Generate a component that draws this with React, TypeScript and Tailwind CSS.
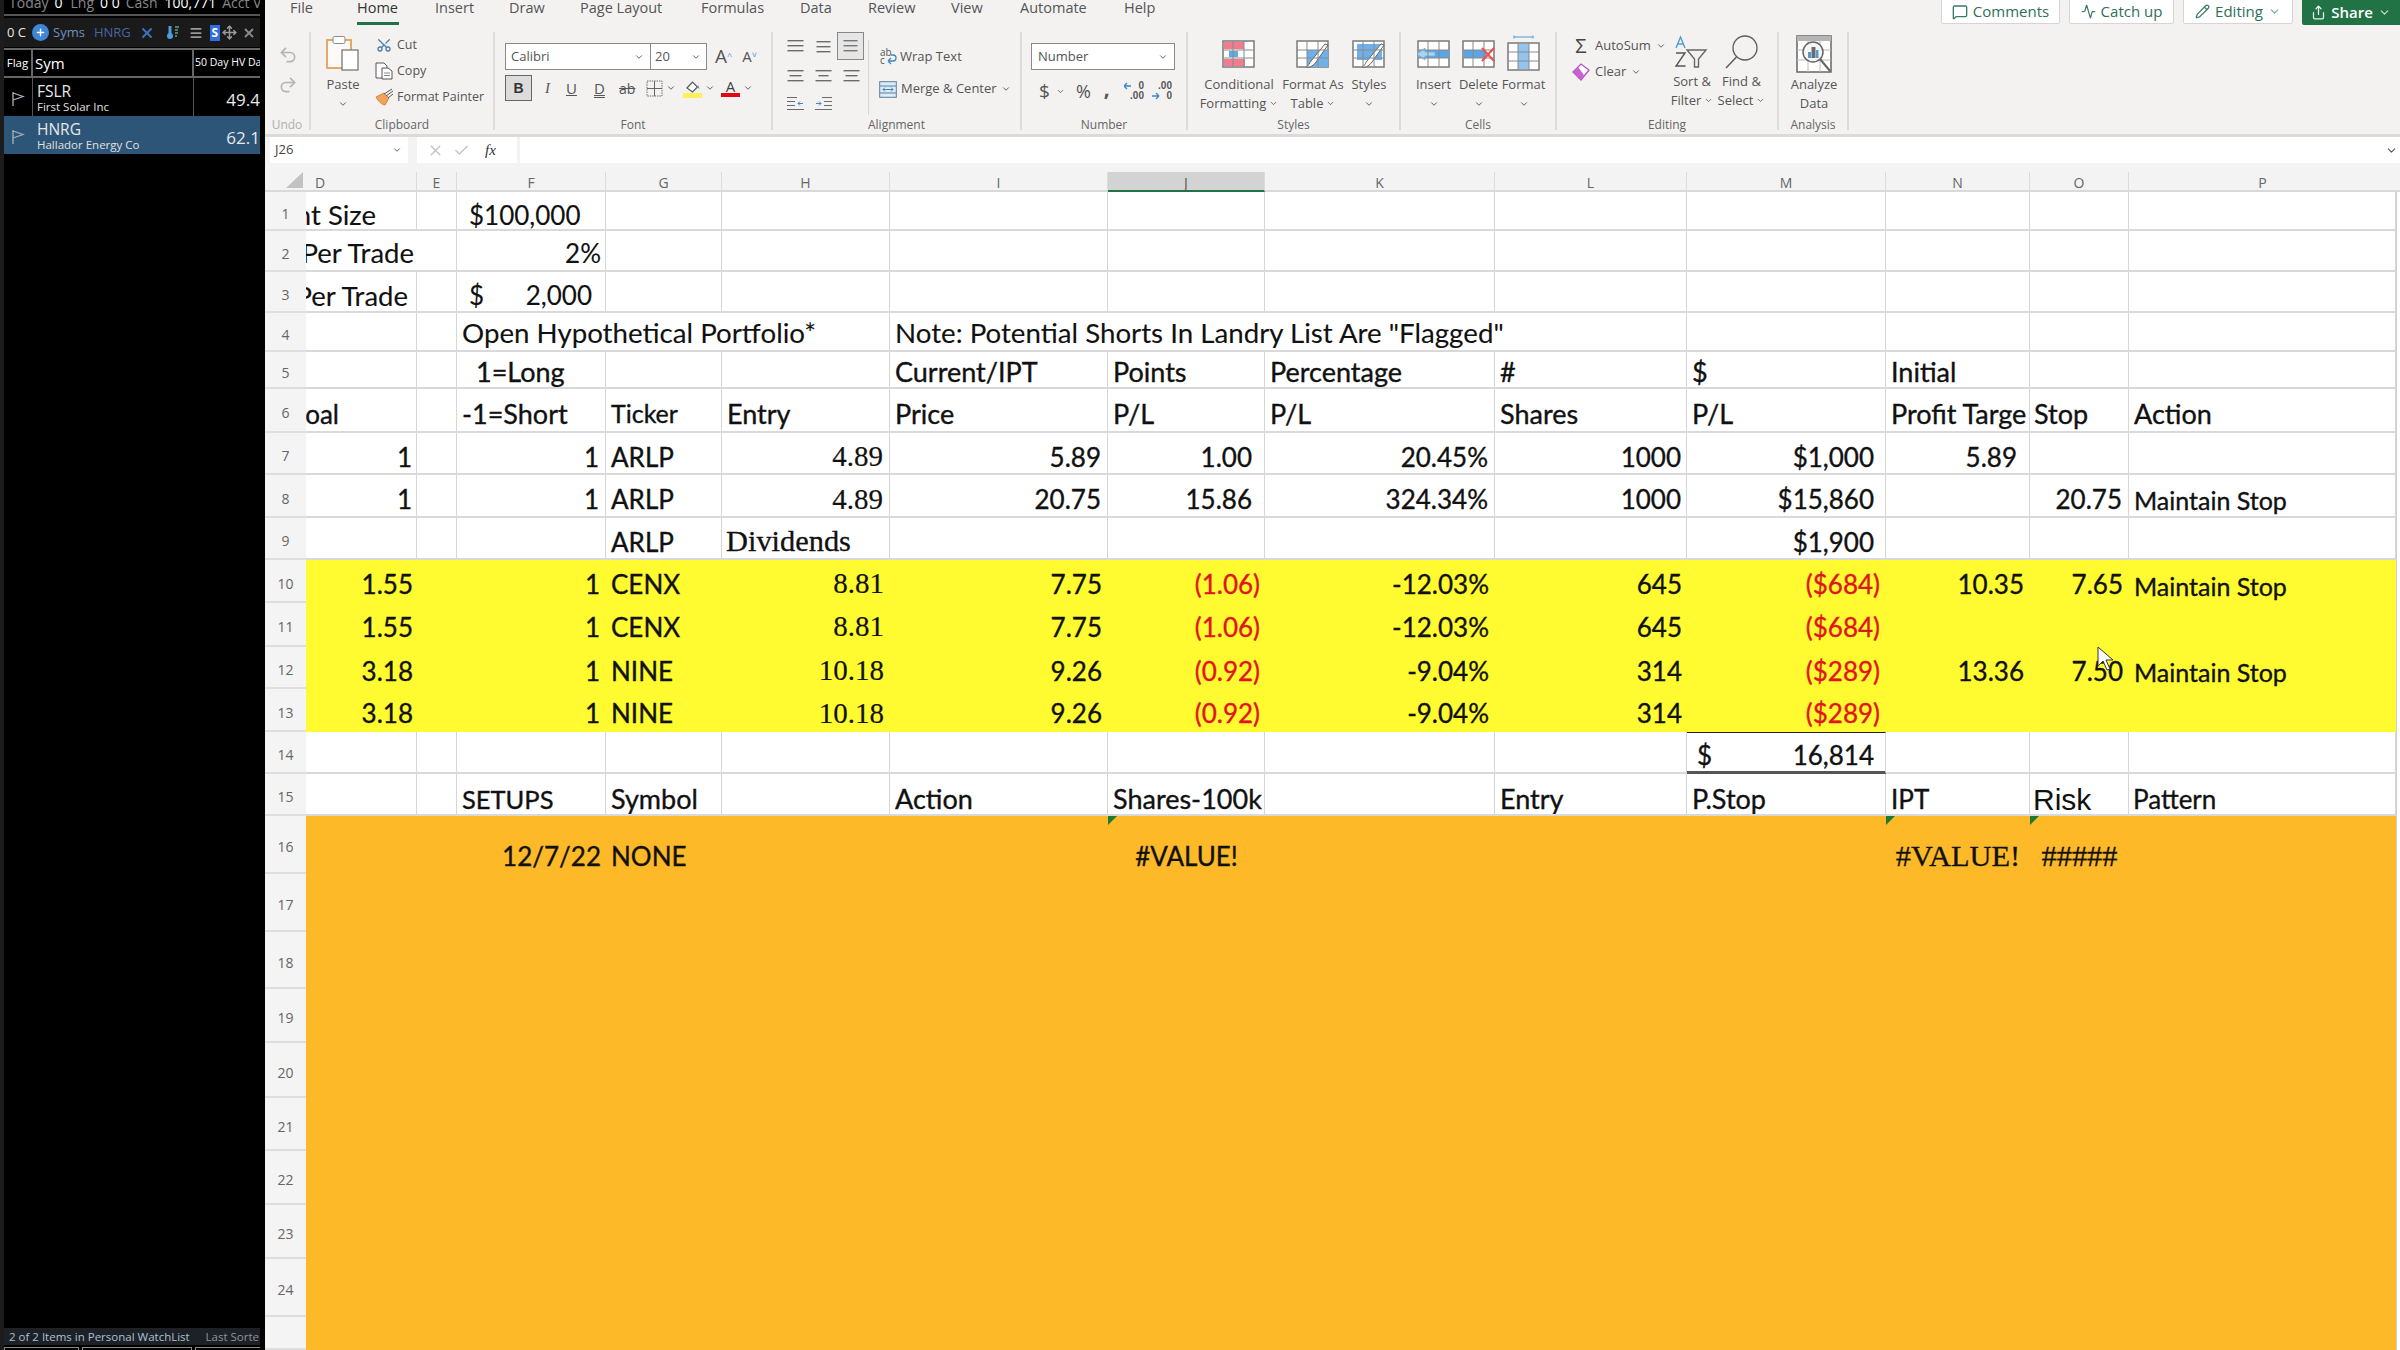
import React from 'react';
import { Undo2, Redo2, ChevronDown, X, Check, MessageSquare, Pencil, Share, Move, Menu, Plus, Scissors, Activity } from 'lucide-react';

const Chev = ({ s = 10, c = '#555' }: { s?: number; c?: string }) => <ChevronDown size={s} color={c} strokeWidth={2.2} className="shrink-0" />;

const Lines = ({ w = [16, 16, 16], sel = false }: { w?: number[]; sel?: boolean }) => (
  <svg width="17" height="14" viewBox="0 0 17 14" className="shrink-0">
    {w.map((l, i) => <rect key={i} x={(17 - l) / 2} y={1 + i * 5} width={l} height="1.4" fill={sel ? '#777' : '#6b6b6b'} />)}
  </svg>
);

const PasteIcon = () => (
  <svg width="34" height="36" viewBox="0 0 34 36" className="shrink-0">
    <rect x="1" y="5" width="24" height="28" fill="#fbfaf8" stroke="#e8a765" strokeWidth="2" />
    <rect x="7" y="1.5" width="12" height="7" rx="1.5" fill="#fff" stroke="#8a8a8a" />
    <rect x="16" y="15" width="16" height="20" fill="#fff" stroke="#6e6e6e" strokeWidth="1.2" />
  </svg>
);
const TableBase = ({ children }: { children?: React.ReactNode }) => (
  <svg width="36" height="34" viewBox="0 0 36 34" className="shrink-0">
    <rect x="2" y="4" width="31" height="26" fill="#fff" stroke="#7a7a7a" strokeWidth="1.5" />
    {children}
    <path d="M2 13h31M2 21h31M12 4v26M23 4v26" stroke="#8a8a8a" strokeWidth="1" fill="none" />
  </svg>
);
const Brush = () => <path d="M33 8 21 25c-2 3-6 6-10 5 3-1 3-4 5-6L30 7z" fill="#fff" stroke="#666" strokeWidth="1" />;

const CondIcon = () => (
  <TableBase>
    <rect x="3" y="5" width="20" height="7" fill="#f07c8f" />
    <rect x="8" y="14" width="9" height="6" fill="#62a9e6" />
    <rect x="3" y="22" width="21" height="7" fill="#f07c8f" />
  </TableBase>
);
const FmtTableIcon = () => (
  <TableBase>
    <rect x="12" y="13" width="21" height="17" fill="#6fb0ea" />
    <Brush />
  </TableBase>
);
const StylesIcon = () => (
  <TableBase>
    <rect x="6" y="7" width="25" height="16" fill="#6fb0ea" />
    <Brush />
  </TableBase>
);
const InsertIcon = () => (
  <TableBase>
    <rect x="3" y="13" width="30" height="8" fill="#5aa5e2" />
    <path d="M1 17 9 11v4h10v4H9v4z" fill="#a9d3f2" stroke="#6fb0ea" strokeWidth=".8" />
  </TableBase>
);
const DeleteIcon = () => (
  <svg width="36" height="34" viewBox="0 0 36 34" className="shrink-0">
    <rect x="2" y="4" width="31" height="26" fill="#fff" stroke="#7a7a7a" strokeWidth="1.5" />
    <rect x="3" y="13" width="22" height="8" fill="#5aa5e2" />
    <path d="M2 13h31M2 21h31M12 4v26M23 4v26" stroke="#8a8a8a" strokeWidth="1" fill="none" />
    <path d="M21 11 33 24M33 11 21 24" stroke="#e65454" strokeWidth="2.2" />
  </svg>
);
const FormatIcon = () => (
  <svg width="36" height="38" viewBox="0 0 36 38" className="shrink-0">
    <rect x="2" y="8" width="31" height="27" fill="#fff" stroke="#7a7a7a" strokeWidth="1.5" />
    <rect x="12" y="9" width="11" height="25" fill="#6fb0ea" opacity=".75" />
    <path d="M2 17h31M2 26h31M12 8v27M23 8v27" stroke="#8a8a8a" strokeWidth="1" fill="none" />
    <path d="M8 2h19M8 .5v3M27 .5v3" stroke="#4d9bd8" strokeWidth="1" />
  </svg>
);
const SortIcon = () => (
  <svg width="36" height="34" viewBox="0 0 36 34" className="shrink-0">
    <path d="M2 13 6.5 2 11 13M3.6 9h6" stroke="#4d9bd8" strokeWidth="1.4" fill="none" />
    <path d="M2 18h9L2 31h9.5" stroke="#555" strokeWidth="1.4" fill="none" />
    <path d="M13 15h19l-7.5 9v8l-4-0v-8z" stroke="#666" strokeWidth="1.4" fill="none" />
  </svg>
);
const FindIcon = () => (
  <svg width="36" height="36" viewBox="0 0 36 36" className="shrink-0">
    <circle cx="21" cy="14" r="12" fill="none" stroke="#5c5c5c" strokeWidth="1.3" />
    <path d="M12.5 23 2 34" stroke="#5c5c5c" strokeWidth="1.5" />
  </svg>
);
const AnalyzeIcon = () => (
  <svg width="38" height="40" viewBox="0 0 38 40" className="shrink-0">
    <rect x="2" y="2" width="34" height="36" fill="#fff" stroke="#666" strokeWidth="1.5" />
    <rect x="2" y="2" width="34" height="5" fill="#b5b5b5" />
    <path d="M2 16h34M2 26h34M13 7v31M25 7v31" stroke="#bbb" strokeWidth="1" />
    <circle cx="18" cy="18" r="10" fill="#f6f6f6" stroke="#666" strokeWidth="1.5" />
    <rect x="13" y="18" width="3" height="6" fill="#4d9bd8" />
    <rect x="16.5" y="13" width="4" height="11" fill="#6b6b6b" />
    <rect x="21" y="16" width="2.5" height="8" fill="#4d9bd8" />
    <path d="M25 25 35 37" stroke="#666" strokeWidth="2" />
  </svg>
);
const CopyIcon = () => (
  <svg width="18" height="18" viewBox="0 0 18 18" className="shrink-0">
    <path d="M1 1h8l3 3v12H1z" fill="#fff" stroke="#555" />
    <path d="M7 6h6l4 3v8H7z" fill="#fff" stroke="#555" />
    <path d="M9 11h6M9 13.5h6" stroke="#888" />
  </svg>
);
const PainterIcon = () => (
  <svg width="19" height="18" viewBox="0 0 19 18" className="shrink-0">
    <path d="M1 9 9 5l5 5-4 7C7 17 3 13 1 9z" fill="#f0a35c" stroke="#d8843a" />
    <path d="M9 6 17 1M11 8l7-5M13 10l5-4" stroke="#555" strokeWidth="1" />
  </svg>
);
const BorderIcon = () => (
  <svg width="17" height="17" viewBox="0 0 17 17" className="shrink-0">
    <rect x="1" y="1" width="15" height="15" fill="none" stroke="#666" strokeDasharray="1.4 1" />
    <path d="M8.5 1v15M1 8.5h15" stroke="#666" />
  </svg>
);
const FillIcon = () => (
  <svg width="19" height="19" viewBox="0 0 19 19" className="shrink-0">
    <path d="M4 9 9.5 3l5 5-5 5z" fill="#fff" stroke="#555" strokeWidth="1.2" />
    <path d="M15 6c1 2 2 3 1 4-1-1-1-2-1-4z" fill="#4d9bd8" />
    <rect x="0" y="14" width="19" height="5" fill="#fdf05a" />
  </svg>
);
const WrapIcon = () => (
  <svg width="19" height="18" viewBox="0 0 19 18" className="shrink-0">
    <text x="1" y="8" fontSize="10" fontFamily="Open Sans" fill="#555">ab</text>
    <text x="1" y="16" fontSize="10" fontFamily="Open Sans" fill="#555">c</text>
    <path d="M9 13h5a3 3 0 0 0 0-6h-2M9 13l3-3M9 13l3 3" stroke="#3b87c8" fill="none" strokeWidth="1.3" />
  </svg>
);
const MergeIcon = () => (
  <svg width="18" height="17" viewBox="0 0 18 17" className="shrink-0">
    <rect x=".7" y=".7" width="16.6" height="15.6" fill="#dcecf8" stroke="#5b7f9c" />
    <path d="M1 5h16M1 12h16" stroke="#5b7f9c" />
    <path d="M4 8.500h10M4 8.500l2-2M4 8.500l2 2M14 8.500l-2-2M14 8.500l-2 2" stroke="#3b87c8" fill="none" />
  </svg>
);
const IndentIcon = ({ flip = false }: { flip?: boolean }) => (
  <svg width="17" height="15" viewBox="0 0 17 15" className="shrink-0">
    <path d={flip ? 'M7 1.500h10M9 5.500h8M9 9.500h8M0 13.500h17' : 'M0 1.500h10M0 5.500h8M0 9.500h8M0 13.500h17'} stroke="#6b6b6b" strokeWidth="1.2" />
    <path d={flip ? 'M1 7.500h5M4 5.500l2 2-2 2' : 'M11 7.500h5M13 5.500l-2 2 2 2'} stroke="#3b87c8" fill="none" />
  </svg>
);
const DecIcon = ({ more = false }: { more?: boolean }) => (
  <svg width="20" height="20" viewBox="0 0 20 20" className="shrink-0">
    <path d={more ? 'M0 5h7M0 5l3-3M0 5l3 3' : 'M0 15h7M7 15l-3-3M7 15l-3 3'} stroke="#3b87c8" fill="none" strokeWidth="1.3" />
    <text x="20" y="8" textAnchor="end" fontSize="10" fontFamily="Liberation Sans" fontWeight="700" fill="#555">{more ? '0' : '.00'}</text>
    <text x="20" y="18" textAnchor="end" fontSize="10" fontFamily="Liberation Sans" fontWeight="700" fill="#555">{more ? '.00' : '0'}</text>
  </svg>
);
const EraserIcon = () => (
  <svg width="19" height="18" viewBox="0 0 19 18" className="shrink-0">
    <path d="M1 9 9 1l8 6-8 10z" fill="#fff" stroke="#b44fc0" strokeWidth="1.3" />
    <path d="M1 9l5-5 6 8-3 5z" fill="#c764d2" />
  </svg>
);

const Group = ({ w, label, children, muted = false }: { w: string; label: string; children: React.ReactNode; muted?: boolean }) => (
  <section className={`${w} shrink-0 h-full flex flex-col border-r-2 border-[#dcdbda]`}>
    <div className="h-[85px] flex">{children}</div>
    <div className={`h-[13px] pt-[1px] text-center text-[12px] leading-[13px] ${muted ? 'text-[#b0b0b0]' : 'text-[#666]'}`}>{label}</div>
  </section>
);

const BigBtn = ({ w, icon, h = 'h-[43px]', lines, chev = false }: { w: string; icon: React.ReactNode; h?: string; lines: string[]; chev?: boolean }) => (
  <div className={`${w} shrink-0 flex flex-col items-center`}>
    <div className={`${h} flex items-center justify-center shrink-0`}>{icon}</div>
    {lines.map((l, i) => (
      <div key={i} className="h-[19px] leading-[19px] whitespace-nowrap flex items-center gap-[3px]">
        {l}{chev && i === lines.length - 1 && l !== '' && <Chev s={9} />}
      </div>
    ))}
    {lines.length === 1 && <div className="h-[19px] flex items-center"><Chev s={10} /></div>}
  </div>
);

const tabs: [string, string][] = [
  ['File', 'w-[67px]'], ['Home', 'w-[78px]'], ['Insert', 'w-[74px]'], ['Draw', 'w-[71px]'], ['Page Layout', 'w-[121px]'],
  ['Formulas', 'w-[99px]'], ['Data', 'w-[68px]'], ['Review', 'w-[83px]'], ['View', 'w-[69px]'], ['Automate', 'w-[104px]'], ['Help', 'w-[60px]'],
];

const TopBtn = ({ w, children }: { w: string; children: React.ReactNode }) => (
  <div className={`${w} h-[25px] -mt-[1px] bg-white border border-[#d6d5d4] rounded-b-[2px] flex items-center justify-center gap-[5px] text-[#2f6f58] text-[15px]`}>{children}</div>
);

function Ribbon() {
  return (
    <div className="h-[137px] shrink-0 bg-[#f3f2f1] border-b-[3px] border-[#dbdad9] font-['Open_Sans',sans-serif] text-[13px] text-[#555] flex flex-col">
      <div className="h-[28px] flex pl-[25px] shrink-0">
        {tabs.map(([t, w]) => (
          <div key={t} className={`${w} shrink-0 flex flex-col text-[14.500px] leading-[16px] ${t === 'Home' ? 'text-[#333] font-medium' : 'text-[#555]'}`}>
            <span>{t}</span>
            {t === 'Home' && <div className="w-[42px] h-[3px] mt-[6px] bg-[#217346]" />}
          </div>
        ))}
        <div className="ml-auto flex gap-[9px]">
          <TopBtn w="w-[119px]"><MessageSquare size={16} color="#3d7a63" />Comments</TopBtn>
          <TopBtn w="w-[105px]"><Activity size={15} color="#3d7a63" />Catch up</TopBtn>
          <TopBtn w="w-[110px]"><Pencil size={15} color="#3d7a63" />Editing<ChevronDown size={13} color="#7a9" /></TopBtn>
          <div className="w-[98px] h-[26px] -mt-[1px] bg-[#217346] rounded-bl-[2px] flex items-center justify-center gap-[5px] text-white text-[15px] font-semibold">
            <Share size={15} color="#e8f2ec" />Share<ChevronDown size={13} color="#cfe3d8" />
          </div>
        </div>
      </div>
      <div className="h-[98px] mt-[4px] flex shrink-0">
        <Group w="w-[46px]" label="Undo" muted>
          <div className="flex flex-col items-center w-full pt-[13px] gap-[10px] pl-[2px]">
            <Undo2 size={20} color="#b4b4b4" />
            <Redo2 size={20} color="#b4b4b4" />
          </div>
        </Group>
        <Group w="w-[184px]" label="Clipboard">
          <div className="ml-[8px] w-[48px] flex flex-col items-center pt-[3px]">
            <PasteIcon />
            <span className="mt-[4px] leading-[18px]">Paste</span>
            <div className="mt-[6px]"><Chev /></div>
          </div>
          <div className="ml-[8px] flex flex-col text-[12.500px]">
            {[[<Scissors key="c" size={16} color="#4d7fa8" className="-rotate-90" />, 'Cut'], [<CopyIcon key="p" />, 'Copy'], [<PainterIcon key="f" />, 'Format Painter']].map(([ic, t], i) => (
              <div key={i} className="h-[26px] flex items-center gap-[4px] whitespace-nowrap">
                <div className="w-[18px] flex justify-center">{ic}</div>{t}
              </div>
            ))}
          </div>
        </Group>
        <Group w="w-[278px]" label="Font">
          <div className="pl-[10px] pt-[11px] flex flex-col">
            <div className="flex items-center">
              <div className="w-[202px] h-[27px] bg-white border border-[#8a8a8a] flex text-[13px]">
                <div className="w-[145px] border-r border-[#8a8a8a] flex items-center justify-between pl-[5px] pr-[6px]">Calibri<Chev /></div>
                <div className="flex-1 flex items-center justify-between pl-[4px] pr-[5px]">20<Chev /></div>
              </div>
              <span className="ml-[8px] text-[19px] leading-none">A<sup className="text-[9px] text-[#4d9bd8]">^</sup></span>
              <span className="ml-[10px] text-[15px] leading-none">A<sup className="text-[9px] text-[#4d9bd8]">˅</sup></span>
            </div>
            <div className="mt-[5px] flex items-center h-[26px] text-[15px]">
              <div className="w-[27px] h-[26px] bg-[#dcdcdc] border border-[#666] flex items-center justify-center font-bold font-['Liberation_Sans',sans-serif] text-[#333] text-[14px]">B</div>
              <span className="ml-[13px] w-[14px] italic font-['Liberation_Serif',serif]">I</span>
              <span className="ml-[7px] w-[14px] underline">U</span>
              <span className="ml-[14px] w-[14px] underline decoration-double">D</span>
              <span className="ml-[11px] w-[20px] line-through text-[14px]">ab</span>
              <div className="ml-[7px] flex items-center gap-[3px]"><BorderIcon /><Chev /></div>
              <div className="ml-[7px] flex items-center gap-[3px]"><FillIcon /><Chev /></div>
              <div className="ml-[6px] flex items-center gap-[3px]">
                <div className="flex flex-col items-center w-[19px] leading-[14px] text-[#444]">A<div className="w-full h-[4px] bg-[#e30613]" /></div><Chev />
              </div>
            </div>
          </div>
        </Group>
        <Group w="w-[249px]" label="Alignment">
          <div className="flex w-full">
            <div className="w-[95px] pl-[14px] flex flex-col">
              <div className="h-[28px] flex items-center gap-[11px]">
                <Lines /><div className="mt-[2px]"><Lines w={[14, 14, 14]} /></div>
                <div className="w-[27px] h-[28px] -ml-[6px] bg-[#e6e6e6] border border-[#888] flex items-center justify-center"><Lines w={[14, 14, 14]} sel /></div>
              </div>
              <div className="h-[29px] mt-[1px] flex items-center gap-[11px]">
                <Lines w={[16, 12, 16]} /><Lines w={[16, 10, 16]} /><Lines w={[16, 12, 16]} />
              </div>
              <div className="h-[26px] flex items-center gap-[11px]"><IndentIcon /><IndentIcon flip /></div>
            </div>
            <div className="w-px h-[75px] mt-[8px] bg-[#d8d7d6] shrink-0" />
            <div className="pl-[10px] flex flex-col pt-[10px]">
              <div className="h-[30px] flex items-center gap-[2px]"><WrapIcon />Wrap Text</div>
              <div className="h-[34px] flex items-center gap-[4px] whitespace-nowrap"><MergeIcon />Merge &amp; Center<Chev /></div>
            </div>
          </div>
        </Group>
        <Group w="w-[166px]" label="Number">
          <div className="pl-[9px] pt-[11px] flex flex-col">
            <div className="w-[144px] h-[27px] bg-white border border-[#8a8a8a] flex items-center justify-between px-[6px]">Number<Chev /></div>
            <div className="mt-[4px] h-[34px] flex items-center text-[19px] text-[#555]">
              <span className="ml-[8px]">$</span><div className="ml-[6px]"><Chev s={9} /></div>
              <span className="ml-[11px] text-[18px]">%</span><span className="ml-[13px] font-bold text-[21px] leading-none -mt-[6px]">,</span>
              <div className="ml-[14px]"><DecIcon more /></div><div className="ml-[8px]"><DecIcon /></div>
            </div>
          </div>
        </Group>
        <Group w="w-[213px]" label="Styles">
          <div className="ml-[17px]"><BigBtn w="w-[68px]" icon={<CondIcon />} lines={['Conditional', 'Formatting']} chev /></div>
          <BigBtn w="w-[80px]" icon={<FmtTableIcon />} lines={['Format As', 'Table']} chev />
          <BigBtn w="w-[32px]" icon={<StylesIcon />} lines={['Styles']} />
        </Group>
        <Group w="w-[156px]" label="Cells">
          <div className="ml-[10px] flex">
            <BigBtn w="w-[45px]" icon={<InsertIcon />} lines={['Insert']} />
            <BigBtn w="w-[45px]" icon={<DeleteIcon />} lines={['Delete']} />
            <BigBtn w="w-[45px]" icon={<FormatIcon />} lines={['Format']} />
          </div>
        </Group>
        <Group w="w-[222px]" label="Editing">
          <div className="w-[110px] shrink-0 pl-[15px] pt-[1px] flex flex-col">
            <div className="h-[26px] flex items-center gap-[5px] whitespace-nowrap"><span className="text-[20px] leading-none w-[18px] text-center text-[#444]">Σ</span>AutoSum<Chev /></div>
            <div className="h-[26px] flex items-center gap-[5px]"><div className="w-[18px]"><EraserIcon /></div>Clear<Chev /></div>
          </div>
          <BigBtn w="w-[50px]" h="h-[40px]" icon={<SortIcon />} lines={['Sort &', 'Filter']} chev />
          <BigBtn w="w-[49px]" h="h-[40px]" icon={<FindIcon />} lines={['Find &', 'Select']} chev />
        </Group>
        <Group w="w-[70px]" label="Analysis">
          <BigBtn w="w-[70px]" icon={<AnalyzeIcon />} lines={['Analyze', 'Data']} />
        </Group>
      </div>
    </div>
  );
}

function FormulaBar() {
  return (
    <div className="h-[35px] shrink-0 bg-[#f3f3f3] flex font-['Open_Sans',sans-serif] text-[13px] text-[#444]">
      <div className="ml-[5px] w-[138px] h-[26px] bg-white flex items-center justify-between pl-[5px] pr-[6px]">J26<Chev /></div>
      <div className="ml-[9px] w-[100px] h-[26px] bg-white flex items-center gap-[9px] pl-[10px]">
        <X size={17} color="#c4c4c4" /><Check size={17} color="#c4c4c4" />
        <span className="ml-[6px] italic font-['Liberation_Serif',serif] text-[15px] text-[#333]">fx</span>
      </div>
      <div className="ml-[3px] flex-1 h-[26px] bg-white flex justify-end items-center pr-[2px]"><ChevronDown size={13} color="#555" /></div>
    </div>
  );
}

type Cell = { t?: React.ReactNode; c?: string; span?: string };
const base = "font-['Lato',sans-serif] text-[26px] font-normal [-webkit-text-stroke:0.35px]";
const lab = "font-['Lato',sans-serif] text-[27px] font-normal [-webkit-text-stroke:0.35px]";
const thin = "font-['Lato',sans-serif] text-[26px] font-normal [-webkit-text-stroke:0.1px]";
const thinWide = "font-['Lato',sans-serif] text-[27.700px] font-normal [-webkit-text-stroke:0.1px]";
const clipped = "font-['Lato',sans-serif] text-[27.500px] font-normal [-webkit-text-stroke:0.1px]";
const serif = "font-['Liberation_Serif',serif] text-[29px] [-webkit-text-stroke:0.2px]";
const serifWide = "font-['Liberation_Serif',serif] text-[30.400px] [-webkit-text-stroke:0.3px]";
const act = "font-['Lato',sans-serif] text-[25px] font-normal [-webkit-text-stroke:0.35px]";
const redText = `${base} text-[#e2141b]`;

const R = (t: React.ReactNode, pr = 'pr-[6px]', f = base): Cell => ({ t, c: `justify-end ${pr} ${f}` });
const L = (t: React.ReactNode, pl = 'pl-[5px]', f = lab): Cell => ({ t, c: `justify-start ${pl} ${f}` });
const C = (t: string) => L(t, 'pl-[5px]', base);
const O: Cell = {};
const D = (t: string) => R(t, 'pr-[4px]');
const M = (mt: string) => L(<span className={mt}>Maintain Stop</span>, 'pl-[5px]', act);

type Row = { n: number; cells: Cell[]; fill?: 'y' | 'o'; pt?: string };

const rows: Row[] = [
  { n: 1, pt: 'pt-[9px]', cells: [R('nt Size', 'pr-[40px]', clipped), O, L('$100,000', 'pl-[12px]', thin), O, O, O, O, O, O, O, O, O, O] },
  { n: 2, pt: 'pt-[5px]', cells: [{ ...R('Per Trade', 'pr-[42px]', clipped), span: 'col-span-2' }, R('2%', 'pr-[4px]', thin), O, O, O, O, O, O, O, O, O, O] },
  { n: 3, pt: 'pt-[8px]', cells: [R('Per Trade', 'pr-[8px]', clipped), O, { t: <><span>$</span><span>2,000</span></>, c: `justify-between pl-[12px] pr-[13px] ${thin}` }, O, O, O, O, O, O, O, O, O, O] },
  { n: 4, pt: 'pt-[3px]', cells: [O, O, { ...L('Open Hypothetical Portfolio*', 'pl-[5px]', thinWide), span: 'col-span-3' }, { ...L('Note: Potential Shorts In Landry List Are "Flagged"', 'pl-[5px]', thinWide), span: 'col-span-4' }, O, O, O, O] },
  { n: 5, pt: 'pt-[6px]', cells: [O, O, L('1=Long', 'pl-[19px]'), O, O, L('Current/IPT'), L('Points'), L('Percentage'), L('#'), L('$'), L('Initial'), O, O] },
  { n: 6, pt: 'pt-[8px]', cells: [R('oal', 'pr-[77px]'), O, L('-1=Short'), L('Ticker', 'pl-[5px]', "font-['Lato',sans-serif] text-[25px] [-webkit-text-stroke:0.35px]"), L('Entry'), L('Price'), L('P/L'), L('P/L'), L('Shares'), L('P/L'), L('Profit Targe'), L('Stop', 'pl-[4px]'), L('Action')] },
  { n: 7, pt: 'pt-[8px]', cells: [D('1'), O, R('1'), C('ARLP'), R('4.89', 'pr-[6px]', serif), R('5.89'), R('1.00', 'pr-[12px]'), R('20.45%'), R('1000', 'pr-[5px]'), R('$1,000', 'pr-[11px]'), R('5.89', 'pr-[12px]'), O, O] },
  { n: 8, pt: 'pt-[8px]', cells: [D('1'), O, R('1'), C('ARLP'), R('4.89', 'pr-[6px]', serif), R('20.75'), R('15.86', 'pr-[12px]'), R('324.34%'), R('1000', 'pr-[5px]'), R('$15,860', 'pr-[11px]'), O, R('20.75'), M('mt-[2px]')] },
  { n: 9, pt: 'pt-[8px]', cells: [O, O, O, C('ARLP'), L('Dividends', 'pl-[4px]', serifWide), O, O, O, O, R('$1,900', 'pr-[11px]'), O, O, O] },
  { n: 10, fill: 'y', pt: 'pt-[5px]', cells: [D('1.55'), O, R('1'), C('CENX'), R('8.81', 'pr-[6px]', serif), R('7.75'), R('(1.06)', 'pr-[5px]', redText), R('-12.03%'), R('645', 'pr-[5px]'), R('($684)', 'pr-[6px]', redText), R('10.35'), R('7.65'), M('mt-[6px]')] },
  { n: 11, fill: 'y', pt: 'pt-[4px]', cells: [D('1.55'), O, R('1'), C('CENX'), R('8.81', 'pr-[6px]', serif), R('7.75'), R('(1.06)', 'pr-[5px]', redText), R('-12.03%'), R('645', 'pr-[5px]'), R('($684)', 'pr-[6px]', redText), O, O, O] },
  { n: 12, fill: 'y', pt: 'pt-[6px]', cells: [D('3.18'), O, R('1'), C('NINE'), R('10.18', 'pr-[6px]', serif), R('9.26'), R('(0.92)', 'pr-[5px]', redText), R('-9.04%'), R('314', 'pr-[5px]'), R('($289)', 'pr-[6px]', redText), R('13.36'), R('7.50'), M('mt-[3px]')] },
  { n: 13, fill: 'y', pt: 'pt-[6px]', cells: [D('3.18'), O, R('1'), C('NINE'), R('10.18', 'pr-[6px]', serif), R('9.26'), R('(0.92)', 'pr-[5px]', redText), R('-9.04%'), R('314', 'pr-[5px]'), R('($289)', 'pr-[6px]', redText), O, O, O] },
  { n: 14, pt: 'pt-[6px]', cells: [O, O, O, O, O, O, O, O, O, { t: <><span>$</span><span>16,814</span></>, c: `justify-between pl-[10px] pr-[11px] ${base}` }, O, O, O] },
  { n: 15, pt: 'pt-[10px]', cells: [O, O, L('SETUPS', 'pl-[5px]', "font-['Lato',sans-serif] text-[25.500px] [-webkit-text-stroke:0.35px]"), L('Symbol'), O, L('Action'), L('Shares-100k'), O, L('Entry'), L('P.Stop'), C('IPT'), L('Risk', 'pl-[3px]', "font-['Liberation_Sans',sans-serif] text-[30px]"), L('Pattern', 'pl-[4px]', "font-['Lato',sans-serif] text-[26px] [-webkit-text-stroke:0.3px]")] },
  { n: 16, fill: 'o', pt: 'pt-[23px]', cells: [O, O, R('12/7/22', 'pr-[5px]'), C('NONE'), O, O, { t: '#VALUE!', c: `justify-center ${base}` }, O, O, O, { t: '#VALUE!', c: `justify-center ${serifWide}` }, { t: '#####', c: `justify-center ${serifWide}` }, O] },
  ...[17, 18, 19, 20, 21, 22, 23, 24, 25].map((n) => ({ n, fill: 'o' as const, cells: Array.from({ length: 13 }, () => O) })),
];

const cols = ['D', 'E', 'F', 'G', 'H', 'I', 'J', 'K', 'L', 'M', 'N', 'O', 'P'];

const Tri = () => <span className="w-0 h-0 border-t-[9px] border-r-[9px] border-t-[#1f7a34] border-r-transparent block" />;

function Sheet() {
  return (
    <div className="flex-1 grid grid-cols-[41px_111px_40px_149px_116px_168px_218px_157px_230px_192px_199px_144px_99px_267px_1fr] grid-rows-[20px_39px_41px_41px_39px_37px_44px_42px_43px_42px_43px_44px_42px_43px_42px_42px_58px_58px_57px_54px_55px_53px_54px_54px_58px_33px] bg-white text-[#111] overflow-hidden">
      <div className="bg-[#f3f3f3] border-b-2 border-[#d9d9d9] flex items-end justify-end pr-[3px] pb-[2px]">
        <svg width="17" height="16" viewBox="0 0 17 16"><path d="M17 0v16H0z" fill="#c2c2c2" /></svg>
      </div>
      {cols.map((c) => (
        <div key={c} className={`border-b-2 pt-[3px] flex items-center font-['Open_Sans',sans-serif] text-[14px] leading-none ${c === 'D' ? 'justify-start pl-[9px]' : 'justify-center'} ${c === 'J' ? 'bg-[#d3d3d3] border-[#217346] text-[#555]' : 'bg-[#f3f3f3] border-[#d9d9d9] text-[#666]'} ${c === 'P' ? '' : 'border-r border-r-[#dcdcdc]'}`}>{c}</div>
      ))}
      <div className="bg-[#f3f3f3] border-b-2 border-[#d9d9d9]" />
      {rows.map((r) => (
        <React.Fragment key={r.n}>
          <div className="bg-[#f4f4f4] border-b-2 border-[#dedede] pt-[5px] flex items-center justify-center font-['Open_Sans',sans-serif] text-[14px] text-[#666]">{r.n === 25 ? '' : r.n}</div>
          {r.cells.map((cell, i) => {
            const flagged = r.n === 16 && (i === 6 || i === 10 || i === 11);
            const total = r.n === 14 && i === 9;
            const fill = r.fill === 'y'
              ? 'bg-[#fffb30]'
              : r.fill === 'o'
                ? 'bg-[#fdb927]'
                : total
                  ? 'border-r border-r-[#d6d6d6] border-t border-t-[#222] border-b-[3px] border-b-[#555]'
                  : 'border-r border-b-2 border-r-[#d6d6d6] border-b-[#d9d9d9]';
            return (
              <div key={i} className={`relative flex items-center overflow-hidden whitespace-nowrap ${fill} ${cell.span ?? ''} ${r.pt ?? ''} ${cell.c ?? ''}`}>
                {flagged && <span className="absolute left-0 top-0"><Tri /></span>}
                {cell.t}
              </div>
            );
          })}
          <div className="bg-white border-l border-[#cfcfcf]" />
        </React.Fragment>
      ))}
    </div>
  );
}

const FlagIcon = () => (
  <svg width="14" height="15" viewBox="0 0 14 15"><path d="M2 1v14M2 2l10 3.500L2 9" fill="none" stroke="#a8b2bb" strokeWidth="1.3" /></svg>
);

const WatchRow = ({ sym, name, val, sel = false }: { sym: string; name: string; val: string; sel?: boolean }) => (
  <div className={`h-[38px] flex ${sel ? 'bg-[#2d5577]' : ''}`}>
    <div className={`w-[29px] flex items-center justify-center pt-[3px] border-r ${sel ? 'border-[#2d5577]' : 'border-[#555]'}`}><FlagIcon /></div>
    <div className={`w-[161px] pl-[4px] pt-[4px] flex flex-col border-r ${sel ? 'border-[#2d5577]' : 'border-[#555]'}`}>
      <span className="text-[15.500px] leading-[18px] text-[#e8e8e8]">{sym}</span>
      <span className="text-[11.500px] leading-[13px] text-[#e0e0e0] whitespace-nowrap">{name}</span>
    </div>
    <div className="flex-1 overflow-hidden flex justify-end items-center pt-[6px] text-[17px] text-[#e8e8e8] whitespace-nowrap">{val}</div>
  </div>
);

function Watchlist() {
  return (
    <aside className="w-[265px] shrink-0 h-full bg-black border-l-[4px] border-r-[5px] border-l-[#1c1c1c] border-r-black flex flex-col font-['Open_Sans',sans-serif] overflow-hidden">
      <div className="h-[16px] shrink-0 border-b-2 border-[#555] flex items-end text-[14px] font-medium leading-[20px] whitespace-nowrap overflow-hidden pl-[5px] pb-[1px]">
        <span className="text-[#888]">Today</span><span className="ml-[6px] text-white">0</span>
        <span className="text-[#888] ml-[8px]">Lng</span><span className="ml-[6px] text-white">0 0</span>
        <span className="text-[#888] ml-[6px]">Cash</span><span className="ml-[7px] text-white">100,771</span>
        <span className="text-[#888] ml-[6px]">Acct Va</span>
      </div>
      <div className="h-[29px] mt-[2px] shrink-0 bg-[#1a1a1a] flex items-center text-[14px] whitespace-nowrap pl-[3px]">
        <span className="text-[#e8e8d8] text-[13px] w-[25px]">0 C</span>
        <span className="w-[17px] h-[17px] rounded-full bg-[#3f86d6] flex items-center justify-center shrink-0"><Plus size={11} color="#fff" strokeWidth={3} /></span>
        <span className="ml-[4px] text-[#6e93bd] text-[13px]">Syms</span>
        <span className="ml-[9px] text-[#4566a6] text-[13px]">HNRG</span>
        <X size={16} color="#3d72b8" strokeWidth={3} className="ml-[8px] shrink-0" />
        <svg width="14" height="15" viewBox="0 0 14 15" className="ml-[11px] shrink-0"><path d="M4 1v8" stroke="#4d9be0" strokeWidth="3" /><circle cx="4" cy="11" r="3" fill="#4d9be0" /><path d="M9 2h4M9 5h3M9 8h3M9 11h2" stroke="#5aa868" strokeWidth="1.4" /></svg>
        <Menu size={14} color="#999" strokeWidth={3} className="ml-[9px] shrink-0" />
        <span className="ml-[7px] w-[10px] h-[16px] bg-[#2f6fe0] text-white text-[12px] font-bold leading-[16px] overflow-hidden text-center shrink-0">S</span>
        <Move size={15} color="#999" strokeWidth={2.4} className="ml-[2px] shrink-0" />
        <X size={14} color="#888" strokeWidth={3.2} className="ml-[5px] shrink-0" />
      </div>
      <div className="h-[30px] mt-[1px] shrink-0 flex border-y-2 border-[#666] text-white">
        <div className="w-[29px] border-r-2 border-[#666] flex items-center justify-center text-[11.500px]">Flag</div>
        <div className="w-[161px] border-r-2 border-[#666] flex items-center pl-[2px] text-[15px]">Sym</div>
        <div className="flex-1 flex items-center pl-[1px] text-[10.500px] whitespace-nowrap overflow-hidden">50 Day HV Dai</div>
      </div>
      <WatchRow sym="FSLR" name="First Solar Inc" val="49.4" />
      <WatchRow sym="HNRG" name="Hallador Energy Co" val="62.1" sel />
      <div className="flex-1" />
      <div className="h-[17px] shrink-0 bg-[#1d2126] flex items-center justify-between pl-[5px] pr-[1px] text-[11.500px] whitespace-nowrap overflow-hidden">
        <span className="text-[#a9c0d6]">2 of 2 Items in Personal WatchList</span>
        <span className="text-[#8d9499] ml-[10px]">Last Sorte</span>
      </div>
      <div className="h-[5px] shrink-0 flex gap-[3px] pt-[2px]">
        <div className="w-[75px] border-t border-x border-[#888]" />
        <div className="w-[110px] border-t border-x border-[#888]" />
        <div className="flex-1 border-t border-l border-[#888]" />
      </div>
    </aside>
  );
}

export default function App() {
  return (
    <div className="relative w-[2400px] h-[1350px] flex overflow-hidden bg-white">
      <Watchlist />
      <main className="flex-1 min-w-0 flex flex-col">
        <Ribbon />
        <FormulaBar />
        <Sheet />
      </main>
      <svg width="18" height="26" viewBox="0 0 18 26" className="absolute left-[2096px] top-[646px]">
        <path d="M2 1v19l5-5 4 9 3-1-4-9h7z" fill="#fff" stroke="#333" strokeWidth="1" />
      </svg>
    </div>
  );
}
